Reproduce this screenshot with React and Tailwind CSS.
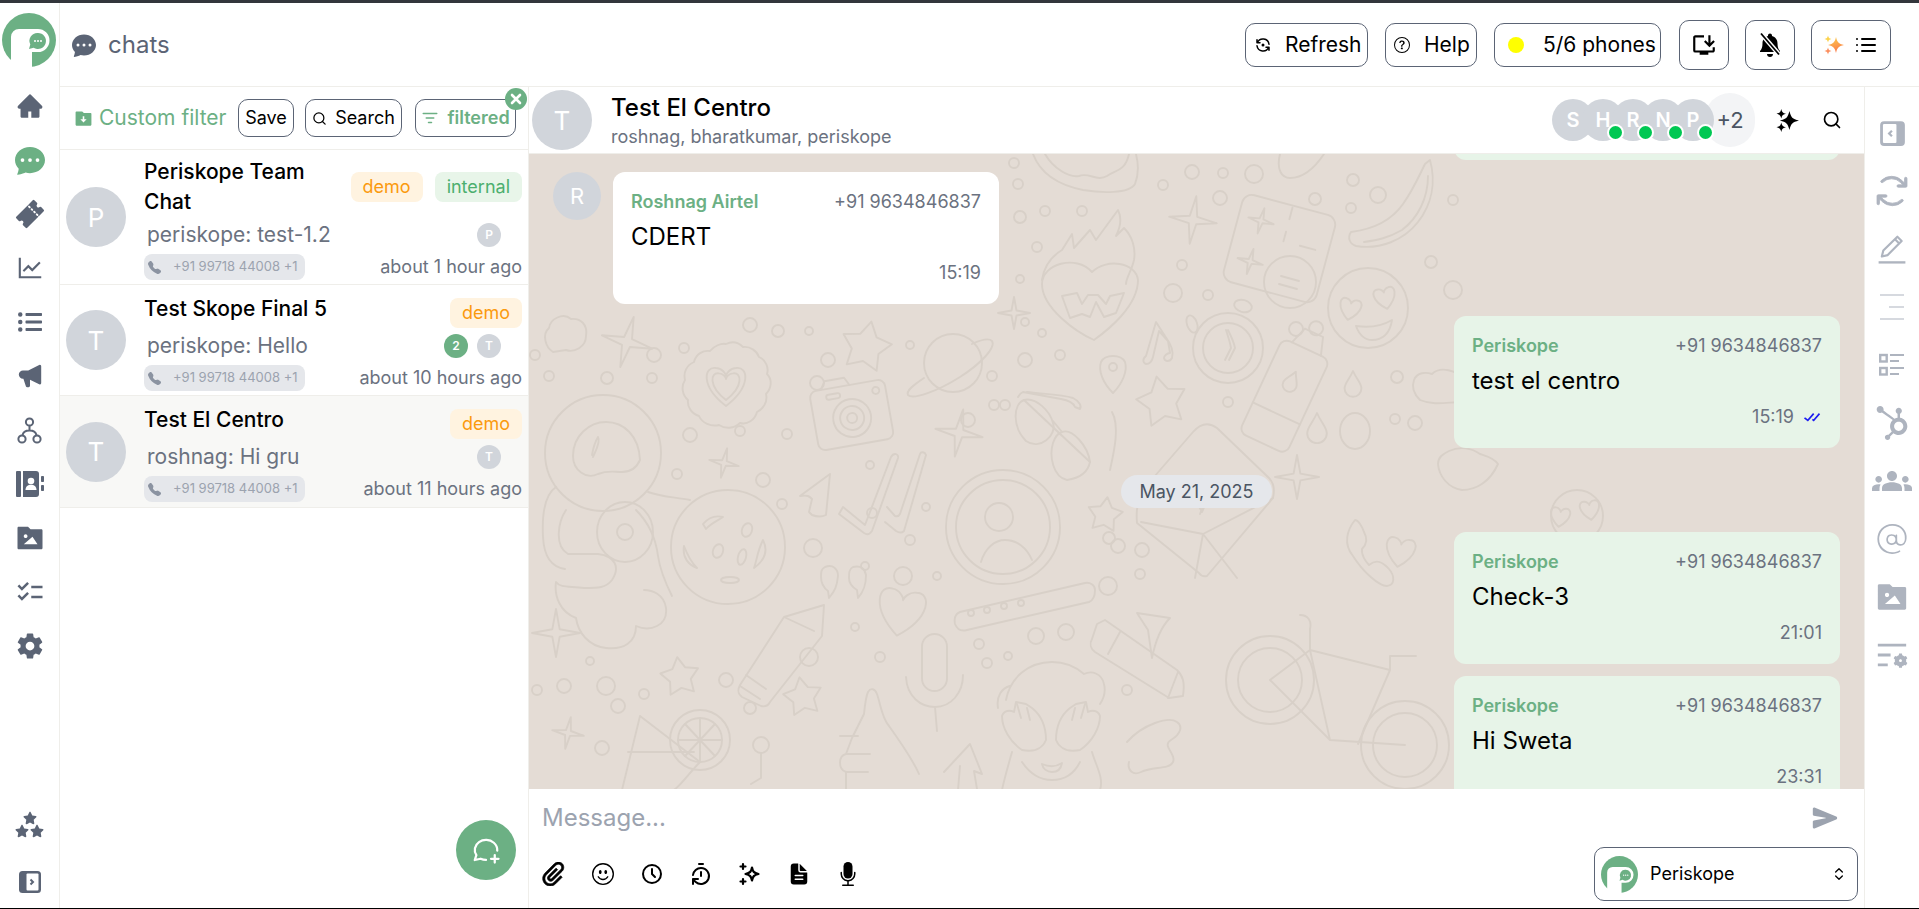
import React from 'react'
import { IoTicket, IoSettingsSharp, IoSend, IoDocumentText } from 'react-icons/io5'
import { BsChatDotsFill, BsEmojiSmile, BsQuestionCircle, BsTelephoneFill, BsFillMicFill } from 'react-icons/bs'
import { AiOutlineLineChart, AiFillHome } from 'react-icons/ai'
import { FaListUl, FaHubspot, FaStar } from 'react-icons/fa'
import { HiSpeakerphone } from 'react-icons/hi'
import { TbRefreshDot, TbMessageCirclePlus, TbClock } from 'react-icons/tb'
import { RiFolderImageFill, RiFolderDownloadFill, RiListSettingsFill } from 'react-icons/ri'
import { MdChecklist, MdOutlineInstallDesktop, MdGroups } from 'react-icons/md'
import { LuTimerReset, LuSearch, LuChevronsUpDown, LuListFilter, LuList } from 'react-icons/lu'
import { PiArrowsClockwise } from 'react-icons/pi'
import { CiAt } from 'react-icons/ci'
import { ImAttachment } from 'react-icons/im'
import { BiCheckDouble } from 'react-icons/bi'

const Logo = ({ size = 54 }) => (
  <svg width={size} height={size} viewBox="0 0 54 54">
    <circle cx="27" cy="27" r="27" fill="#6cb084" />
    <path d="M9 54V24a8 8 0 0 1 8-8h19a11 11 0 0 1 0 23h-6v15z" fill="#fff" />
    <path d="M36 20a8 8 0 1 1-4.400 14.700L27 36l1.300-4.400A8 8 0 0 1 36 20z" fill="#6cb084" />
    <circle cx="33" cy="28" r="1" fill="#fff" />
    <circle cx="36" cy="28" r="1" fill="#fff" />
    <circle cx="39" cy="28" r="1" fill="#fff" />
  </svg>
)

const SidebarIcon = ({ size = 24, flip = false, color = '#5b6475' }) => (
  <svg width={size} height={size} viewBox="0 0 24 24" className={flip ? '-scale-x-100' : ''}>
    <rect x="1" y="1" width="22" height="22" rx="3.500" fill={color} />
    <rect x="8.500" y="3.500" width="12" height="17" rx="1" fill="#fff" />
    <path d="M12.500 9.500l2.500 2.500-2.500 2.500" fill="none" stroke={color} strokeWidth="2" />
  </svg>
)

const Sparkle4 = ({ x, y, r, fill }) => (
  <path d={`M${x} ${y - r}C${x + r * 0.18} ${y - r * 0.3} ${x + r * 0.3} ${y - r * 0.18} ${x + r} ${y}C${x + r * 0.3} ${y + r * 0.18} ${x + r * 0.18} ${y + r * 0.3} ${x} ${y + r}C${x - r * 0.18} ${y + r * 0.3} ${x - r * 0.3} ${y + r * 0.18} ${x - r} ${y}C${x - r * 0.3} ${y - r * 0.18} ${x - r * 0.18} ${y - r * 0.3} ${x} ${y - r}z`} fill={fill} />
)

const GradientStars = () => (
  <svg width="20" height="22" viewBox="0 0 20 22">
    <defs>
      <linearGradient id="spark" x1="0" y1="0" x2="0.3" y2="1">
        <stop offset="0" stopColor="#fcd34d" />
        <stop offset="1" stopColor="#fb7c4b" />
      </linearGradient>
    </defs>
    <Sparkle4 x={12} y={11} r={8} fill="url(#spark)" />
    <Sparkle4 x={4} y={5} r={3.500} fill="#fcd34d" />
    <Sparkle4 x={4} y={17} r={3.500} fill="#fb8f5f" />
  </svg>
)

const BlackStars = () => (
  <svg width="23" height="23" viewBox="0 0 24 24">
    <Sparkle4 x={14} y={12} r={10} fill="#000" />
    <Sparkle4 x={5.500} y={5} r={5} fill="#000" />
    <Sparkle4 x={5.500} y={19} r={5} fill="#000" />
  </svg>
)

const OutlineStars = () => (
  <svg width="24" height="24" viewBox="0 0 24 24" fill="none" stroke="#000" strokeWidth="2.200" strokeLinejoin="round">
    <path d="M14 5.500c.8 4 1.800 5.500 6.500 6.500-4.700 1-5.700 2.500-6.500 6.500-.8-4-1.800-5.500-6.500-6.500 4.700-1 5.700-2.500 6.500-6.500z" />
    <path d="M5 2v5M2.500 4.500h5M5 17v5M2.500 19.500h5" strokeLinecap="round" />
  </svg>
)

const BellOff = () => (
  <svg width="24" height="26" viewBox="0 0 24 26">
    <path d="M12 1.500c1.100 0 2 .9 2 2v.6c3.400.9 5.500 3.800 5.500 7.400 0 4 .9 5.800 2.500 7.500v1H2v-1c1.600-1.700 2.500-3.500 2.500-7.500 0-3.600 2.100-6.500 5.500-7.400v-.6c0-1.100.9-2 2-2zM9 22h6c0 1.700-1.300 3-3 3s-3-1.300-3-3z" fill="#000" />
    <path d="M3 1.500l19 22" stroke="#fff" strokeWidth="4.500" />
    <path d="M3 1.500l18 21" stroke="#000" strokeWidth="1.800" />
  </svg>
)

const HierarchyIcon = () => (
  <svg width="25" height="27" viewBox="0 0 25 27" fill="none" stroke="currentColor" strokeWidth="2">
    <circle cx="12.500" cy="5" r="3.600" /><circle cx="5" cy="22" r="3.600" /><circle cx="20" cy="22" r="3.600" />
    <path d="M12.500 8.600v5M12.500 13.600c-4 0-6.500 1.500-7 4.800M12.500 13.600c4 0 6.500 1.500 7 4.800" />
  </svg>
)

const ContactsIcon = () => (
  <svg width="28" height="26" viewBox="0 0 28 26" fill="currentColor">
    <rect x="0" y="0" width="5" height="26" rx="1" />
    <path d="M7 0h13a3 3 0 0 1 3 3v20a3 3 0 0 1-3 3H7z" />
    <circle cx="15" cy="10" r="3.300" fill="#fff" /><path d="M9.500 19c0-3.500 2.500-5.200 5.500-5.200s5.500 1.700 5.500 5.200z" fill="#fff" />
    <rect x="25" y="5" width="3" height="6" rx=".8" /><rect x="25" y="14" width="3" height="6" rx=".8" />
  </svg>
)

const PencilIcon = () => (
  <svg width="30" height="30" viewBox="0 0 28 28" fill="none" stroke="currentColor" strokeWidth="2" strokeLinejoin="round">
    <path d="M4.500 21l1.400-5.500L19 2.500l4 4-13 13.200z" /><path d="M16.800 4.800l4 4" />
    <path d="M1.500 26.500h25" strokeWidth="2.200" />
  </svg>
)

const AlignIcon = () => (
  <svg width="26" height="26" viewBox="0 0 26 26" stroke="currentColor" strokeWidth="1.200">
    <path d="M1 1h24M10 13h15M1 25h24" />
  </svg>
)

const DetailsIcon = () => (
  <svg width="26" height="24" viewBox="0 0 26 24" fill="none" stroke="currentColor">
    <rect x="1.200" y="2" width="6.500" height="6.500" strokeWidth="2.400" /><rect x="1.200" y="15" width="6.500" height="6.500" strokeWidth="2.400" />
    <path d="M11 2h14M11 8h9M11 15h14M11 21h9" strokeWidth="2" />
  </svg>
)

const StarsCluster = () => (
  <div className="flex flex-col items-center text-[#5b6475]">
    <FaStar size={14} />
    <div className="flex gap-[1px] -mt-[1px]"><FaStar size={14} /><FaStar size={14} /></div>
  </div>
)

// wallpaper helpers, all in page pixels
const starPath = (cx, cy, r, rot = 0) => {
  let d = ''
  for (let i = 0; i < 10; i++) {
    const a = (Math.PI / 5) * i - Math.PI / 2 + (rot * Math.PI) / 180
    const rr = i % 2 ? r * 0.55 : r
    d += `${i ? 'L' : 'M'}${(cx + rr * Math.cos(a)).toFixed(1)} ${(cy + rr * Math.sin(a)).toFixed(1)}`
  }
  return d + 'z'
}
const sparklePath = (cx, cy, r, rot = 0) => {
  let d = ''
  for (let i = 0; i < 4; i++) {
    const a = (Math.PI / 2) * i - Math.PI / 2 + (rot * Math.PI) / 180
    const b = a + Math.PI / 4
    const p = [cx + r * Math.cos(a), cy + r * Math.sin(a)]
    const q = [cx + r * 0.22 * Math.cos(b), cy + r * 0.22 * Math.sin(b)]
    d += `${i ? 'L' : 'M'}${p[0].toFixed(1)} ${p[1].toFixed(1)}L${q[0].toFixed(1)} ${q[1].toFixed(1)}`
  }
  return d + 'z'
}
const heartPath = (cx, cy, s, rot = 0) => {
  const c = Math.cos((rot * Math.PI) / 180)
  const n = Math.sin((rot * Math.PI) / 180)
  const t = (x, y) => `${(cx + s * (x * c - y * n)).toFixed(1)} ${(cy + s * (x * n + y * c)).toFixed(1)}`
  return `M${t(0, 1)}C${t(-1.3, 0)} ${t(-1.1, -1)} ${t(-0.5, -0.9)}C${t(-0.2, -0.9)} ${t(0, -0.6)} ${t(0, -0.5)}C${t(0, -0.6)} ${t(0.2, -0.9)} ${t(0.5, -0.9)}C${t(1.1, -1)} ${t(1.3, 0)} ${t(0, 1)}z`
}
const dropPath = (x, y, s) => `M${x} ${y - s}C${x + s * 0.3} ${y - s * 0.3} ${x + s * 0.7} ${y} ${x + s * 0.7} ${y + s * 0.45}A${s * 0.7} ${s * 0.7} 0 0 1 ${x - s * 0.7} ${y + s * 0.45}C${x - s * 0.7} ${y} ${x - s * 0.3} ${y - s * 0.3} ${x} ${y - s}z`

const dots = [
  [535,355,5],[549,376,5],[607,378,6],[652,378,5],[654,355,7],[684,348,5],[690,435,7],[677,474,5],[787,434,5],[763,480,7],[740,431,5],[817,383,7],[828,360,7],[778,331,6],[750,325,7],[809,331,4],[910,345,4],[1025,322,4],[1042,333,4],[1025,360,7],[1060,355,5],[1005,405,5],[994,405,5],[968,420,7],[992,376,5],[782,504,5],[870,465,4],[872,513,5],[813,548,9],[926,507,4],[910,540,5],[865,566,4],[903,576,9],[937,576,4],[1118,546,7],[1142,550,7],[1140,574,5],[1109,538,6],[1108,586,9],[590,661,4],[564,686,7],[606,686,9],[644,694,5],[618,706,7],[726,680,7],[750,708,6],[809,657,9],[880,657,5],[855,627,4],[979,644,5],[1036,636,8],[1066,632,8],[987,663,5],[1008,656,4],[1127,690,5],[602,748,7],[537,690,5],
  [1014,163,5],[1018,184,5],[1020,217,6],[1045,211,5],[1082,211,5],[1037,247,5],[1163,185,5],[1192,172,7],[1223,173,5],[1254,174,9],[1220,198,7],[1315,199,6],[1353,180,6],[1378,195,8],[1351,208,5],[1182,265,5],[1173,293,9],[1208,295,5],[1020,279,4],[1296,329,7],[1431,262,6],[1453,290,9],[1397,377,6],[1395,419,5],[1415,423,7],[1228,402,5],[1453,200,5]
]

const Doodles = () => (
  <svg className="absolute inset-0 w-full h-full" aria-hidden="true">
    <g transform="translate(-529 -154)" fill="none" stroke="#d8d0c8" strokeWidth="1.900" strokeLinecap="round" strokeLinejoin="round">
      {dots.map((d, i) => <circle key={i} cx={d[0]} cy={d[1]} r={d[2]} />)}
      {[[627,342,26,15],[959,433,24,10],[556,633,24,0],[724,463,15,12],[568,733,16,10],[1193,220,24,8],[1014,313,16,0],[1297,477,22,0]].map((s, i) => <path key={i} d={sparklePath(s[0], s[1], s[2], s[3])} />)}
      {[[866,347,26,12],[1105,515,18,8],[680,677,20,-8],[803,697,20,-10],[1162,402,26,-12]].map((s, i) => <path key={i} d={starPath(s[0], s[1], s[2], s[3])} />)}
      {/* cloud */}
      <path d="M553 352c-8-5-11-18-4-24 1-9 14-16 22-9 10-1 17 6 15 17 0 11-12 17-20 14z" />
      {/* cookie with heart */}
      <path d="M726 344c8-4 14 0 17 3 7-1 14 4 16 10 7 3 10 11 8 17 6 6 4 15-1 20 2 8-3 15-9 18-2 8-10 13-17 11-6 6-15 6-21 2-8 2-17-2-20-9-7-2-12-9-11-16-6-5-7-14-3-20-2-8 2-15 9-18 2-8 9-12 16-11 4-5 11-8 16-7z" />
      <path d={heartPath(726, 386, 20)} /><path d={heartPath(726, 386, 14)} />
      {/* planet */}
      <circle cx="953" cy="363" r="29" />
      <path d="M924 378c-12 8-18 13-16 17 5 5 30-4 52-18s36-30 32-36c-3-3-9-2-20 3" />
      {/* camera */}
      <g transform="rotate(-10 852 417)">
        <rect x="814" y="385" width="76" height="60" rx="7" />
        <path d="M826 385l5-8h20l4 8" />
        <circle cx="852" cy="418" r="19" /><circle cx="852" cy="418" r="12" /><circle cx="852" cy="418" r="5" />
        <circle cx="880" cy="395" r="3.500" /><rect x="830" y="391" width="14" height="5" rx="2.500" />
      </g>
      {/* glasses */}
      <path d="M1027 392c14 2 34 2 46 6 6 3 9 8 7 11l-5-2c-2-5-8-7-14-8l-38-7c-4 2-4 4-5 5" />
      <path d="M1024 400c-11 4-12 27 2 41 14 10 31-6 27-18-3-12-17-26-29-23zM1062 432l-9-11M1062 432c10-4 26 14 28 30-2 10-10 16-23 18-14-3-18-24-14-37 2-6 5-10 9-11z" />
      <path d="M1024 400l66 62M1112 412c8 14 2 40-2 58" />
      {/* map pin */}
      <path d="M1113 393c-10-10-15-22-12-31 4-8 20-8 24 0 3 9-3 22-12 31z" /><circle cx="1113" cy="367" r="4" />
      {/* astronaut */}
      <circle cx="603" cy="453" r="58" />
      <path d="M573 456c0-20 16-34 33-34 18 0 33 14 34 38-4 9-10 12-18 12-8 0-14-2-24 2-12 6-25-4-25-18z" />
      <path d="M592 455c1-6 3-13 6-18M598 437c3 5-3 15-5 20" />
      <path d="M556 487c-12 8-14 30-13 50 1 20 8 30 22 32M566 510c-8 12-12 36 2 44h30c18 2 22 14 14 26-6 8-14 8-28 8-14-2-24 0-28-6-2 14 4 30 20 36 2 14 12 28 30 30 18 2 30-6 30-22 14 6 32 0 30-18-2-14-14-18-22-18" />
      <path d="M636 510c14 14 20 30 22 46 2 14 8 28 14 40" />
      <ellipse cx="625" cy="532" rx="28" ry="30" /><circle cx="625" cy="532" r="8" />
      <path d="M648 492c14 5 26 5 42 8" />
      {/* moon */}
      <circle cx="728" cy="547" r="57" />
      <ellipse cx="747" cy="530" rx="5" ry="7" transform="rotate(20 747 530)" /><ellipse cx="718" cy="551" rx="5" ry="7" transform="rotate(20 718 551)" /><ellipse cx="742" cy="557" rx="4" ry="8" transform="rotate(15 742 557)" /><ellipse cx="730" cy="580" rx="9" ry="3" /><path d="M703 524c6-7 12-9 20-7-6 4-13 7-17 12z" /><path d="M684 546c3 8 6 15 13 22-8-3-15-10-13-22zM763 540c5 10 2 20-9 28 3-8 3-16 9-28z" />
      {/* plane */}
      <path d="M830 474l-30 22c8-1 9 0 12 3l-3 13 3 3c5 2 10 2 14 0z" />
      {/* double tick */}
      <path d="M843 507l22 18 26-68c3-5 8-3 7 1l-26 73c-2 3-5 4-8 2l-25-19zM887 507l8 9c3 1 4 0 5-2l20-60c1-3 5-2 6 1l-22 76c-2 2-5 2-8 0l-11-9" />
      {/* person */}
      <circle cx="1003" cy="527" r="57" /><circle cx="1003" cy="527" r="47" /><circle cx="999" cy="517" r="14" /><path d="M981 562c4-14 14-22 24-22 12 0 22 8 27 20" />
      {/* quote */}
      <path d="M825 567c8-3 13 2 13 9-1 10-3 15-9 22l-1-7c-4-3-7-8-7-14 0-5 0-8 4-10zM853 567c8-2 12 2 13 8 0 10-2 16-8 23l-1-8c-5-3-8-7-8-12 0-5 0-9 4-11z" />
      {/* heart */}
      <path d={heartPath(901, 612, 24, 10)} />
      {/* pencil */}
      <path d="M824 605l-40 12-44 68c-3 6-2 9 2 12l19 9c4 1 7 0 9-4l52-66zM784 617l30 14M746 675l20 14M740 686l20 13" />
      {/* watch band */}
      <path d="M960 612c-5 2-6 7-5 12 2 5 5 8 12 6l122-28c5-2 6-8 6-12 0-5-5-8-10-7z" />
      <circle cx="971" cy="613" r="3" /><circle cx="987" cy="610" r="3" /><circle cx="1004" cy="606" r="3" /><circle cx="1021" cy="603" r="3" />
      {/* mic */}
      <rect x="922" y="634" width="25" height="57" rx="12.500" /><path d="M906 677c1 20 15 30 29 30 16 0 28-14 28-32M935 707l2 24" />
      {/* girl covering her eyes */}
      <path d="M1006 700c4-22 22-38 46-38 14 0 24 5 32 12 8-4 18 0 20 10 2 8 0 14-4 20M1010 686c-8 2-14 10-12 22" />
      <path d="M1002 716c2-6 8-6 12-4l2-10 10 2 6 4c10 8 14 20 14 32-4 10-14 12-24 10-12-8-20-22-20-34zM1100 716c-2-6-8-6-12-4l-2-10-10 2-6 4c-10 8-14 20-14 32 4 10 14 12 24 10 12-8 20-22 20-34z" />
      <path d="M1017 704l4 14M1027 708l3 12M1085 704l-4 14M1075 708l-3 12" />
      <path d="M1042 764c7 3 14 3 20-1-1 6-5 9-10 9s-9-3-10-8zM1012 752c-4 14-8 28-10 38M1092 752c4 14 12 26 8 38M1022 762c8 12 18 18 30 18 12 0 22-6 28-18" />
      {/* thumb */}
      <path d="M846 790v-18c-8-3-8-16 0-18l6-16 12-24c1-10 2-18 4-22 3-5 7-3 9 2 4 12 5 24 12 32 10 14 24 34 30 48M840 736h18M846 754h24M846 772h22" />
      {/* cocktail */}
      <path d="M640 716l-18 74M640 716l60 46c-10 10-18 22-26 28M628 752h66" /><circle cx="700" cy="740" r="30" /><circle cx="700" cy="740" r="22" /><path d="M700 718v44M678 740h44M685 724l30 32M685 756l30-32" />
      <circle cx="761" cy="745" r="8" /><path d="M761 753v25l-10 6" />
      {/* arrow */}
      <path d="M944 772l26-28 12 30-8-3 3 18M960 766l-2 24" />
      {/* donut top */}
      <path d="M1033 154c6 16 20 30 50 36 18 3 46 4 52-6 4-10 3-22 1-30" />
      <path d="M1045 154c8 14 24 24 34 22 10-4 18 6 28 0 8-6 18-4 22-22" />
      {/* heart on fire */}
      <path d="M1042 280c2-14 10-24 20-30l10-16 2 14 16-18 6 10 22-30c4 8 2 18-2 26l8-8c8 8 12 20 10 32-2 10-8 18-8 24" />
      <path d="M1042 284c0-20 34-30 50-12 14-14 44-10 46 8 0 26-30 50-44 60-18-8-52-32-52-56z" />
      <path d="M1062 296l8 22 12-4 8 3 6-15 8 15 12-4 8-20-14 3-4 8-8-9h-10l-6 9-5-11z" />
      {/* music note */}
      <path d="M1146 356c-4 3-3 7 0 8 4 0 6-3 7-7l6-26 9 10 2 12c-3 0-6 3-6 5 1 4 6 4 8 0 2-6-1-14-7-22l-9-14z" />
      {/* card */}
      <g transform="rotate(15 1277 250)">
        <rect x="1231" y="203" width="96" height="90" rx="10" />
        <path d="M1281 205v12M1281 230v10M1298 240h16" />
        <path d={sparklePath(1254, 226, 13, 0)} /><path d={sparklePath(1254, 268, 13, 0)} />
      </g>
      <circle cx="1290" cy="282" r="26" /><path d="M1281 276l18 5M1279 284l18 5" />
      {/* banana */}
      <path d="M1430 160c6 22 2 44-12 62-14 18-38 28-62 24-6-2-9-8-5-14 16-2 38-8 52-28 10-14 16-28 22-40l5-4zM1428 176c0 22-10 42-26 54-14 8-24 10-38 12" />
      <path d="M1280 154c-4 16 2 24 10 24 14 0 26-12 34-24" />
      {/* love face */}
      <circle cx="1368" cy="308" r="40" />
      <path d={heartPath(1350, 309, 11, 12)} /><path d={heartPath(1385, 298, 11, -12)} /><path d="M1356 326c14 2 26 0 36-6-2 14-10 20-20 20-8 0-13-6-16-14z" />
      {/* clock */}
      <circle cx="1228" cy="348" r="35" /><circle cx="1228" cy="348" r="25" /><ellipse cx="1243" cy="306" rx="9" ry="6" transform="rotate(15 1243 306)" /><ellipse cx="1192" cy="324" rx="5" ry="9" transform="rotate(-20 1192 324)" />
      <path d="M1226 330c2 6 4 12 5 18l-6 12M1228 330c3 6 6 12 7 18l-6 12" />
      {/* bottle */}
      <g transform="rotate(25 1287 393)">
        <rect x="1260" y="345" width="52" height="104" rx="8" /><path d="M1270 345l6-18h20l6 18M1260 416h52" /><circle cx="1286" cy="322" r="7" /><path d={dropPath(1286, 380, 10)} />
      </g>
      <path d={dropPath(1353, 383, 12)} /><path d={dropPath(1317, 427, 14)} />
      <ellipse cx="1355" cy="431" rx="15" ry="18" />
      <path d="M1420 400c-6-6-9-12-6-20 3-8 12-8 18-6 8-8 26-4 30 6v22c-14 0-28 4-42-2z" />
      {/* envelope */}
      <path d="M1141 492l52-60c8-9 16-10 24-4l52 50c5 5 6 11 4 20l-66 78c-4 1-6 0-8-3l-62-50c-1-10 0-20 4-31z" />
      <path d="M1141 522l62 12 34 44M1195 578l8-44 70-36M1190 490l12 22 14-32M1213 480l-13 34" />
      {/* right side */}
      <path d={heartPath(1400, 552, 15, 10)} />
      <circle cx="1577" cy="516" r="26" /><path d={heartPath(1560, 517, 10, 8)} /><path d={heartPath(1590, 510, 10, -8)} />
      <path d="M1355 520c-8 10-12 24-2 36 10 16 26 30 34 30 8-1 8-10 2-17-7-8-13-10-20-4-3-3-8-10-7-16 4-4 6-10 2-17-2-6-6-12-9-12z" />
      <path d="M1449 451c-6 3-11 6-11 13 1 12 10 24 24 26 14 0 28-8 36-26-4-6-12-8-18-10-8-6-20-8-31-3z" />
      <path d="M1137 613l33 5c-8 8-14 20-18 40l-4-28z" />
      {/* bike */}
      <circle cx="1270" cy="680" r="44" /><circle cx="1270" cy="680" r="32" /><circle cx="1405" cy="745" r="44" /><circle cx="1405" cy="745" r="32" />
      <path d="M1270 680l60 60 75 5M1330 740l-20-90 80 20-32 74M1310 650l-40 30M1300 615c8 0 12 6 10 14l0 21M1390 670l0-14 26 0" />
      {/* pencil 2 */}
      <path d="M1105 620l72 50c6 6 8 12 6 26l-14 2-74-46c-4-3-6-8-3-13l5-15zM1120 632l-12 22M1178 672l-10 26" />
      <path d="M1127 742c16-18 42-26 50-20 6 4 4 12-6 18-10 6 6 14 2 22-4 8-20 4-32 10-8 4-14-2-12-10" />
    </g>
  </svg>
)

const navItems = [
  { icon: <AiFillHome size={28} />, key: 'home' },
  { icon: <BsChatDotsFill size={30} className="text-[#6cb084]" />, key: 'chats' },
  { icon: <IoTicket size={30} />, key: 'tickets' },
  { icon: <AiOutlineLineChart size={30} />, key: 'stats' },
  { icon: <FaListUl size={24} />, key: 'lists' },
  { icon: <HiSpeakerphone size={28} />, key: 'broadcast' },
  { icon: <HierarchyIcon />, key: 'rules' },
  { icon: <ContactsIcon />, key: 'contacts' },
  { icon: <RiFolderImageFill size={30} />, key: 'media' },
  { icon: <MdChecklist size={30} />, key: 'tasks' },
  { icon: <IoSettingsSharp size={28} />, key: 'settings' },
]

const rightItems = [
  <SidebarIcon key="a" size={27} flip color="#aeb4bf" />,
  <PiArrowsClockwise key="b" size={40} stroke="currentColor" strokeWidth={5} />,
  <PencilIcon key="c" />,
  <AlignIcon key="d" />,
  <DetailsIcon key="e" />,
  <FaHubspot key="f" size={34} />,
  <MdGroups key="g" size={40} />,
  <CiAt key="h" size={36} />,
  <RiFolderImageFill key="i" size={34} />,
  <RiListSettingsFill key="j" size={34} />,
]

const Tag = ({ label, kind }) => (
  <span className={`h-[30px] px-3 rounded-lg flex items-center text-lg shrink-0 ${kind === 'demo' ? 'bg-[#fff3e0] text-[#fb9a0e]' : 'bg-[#e8f5e9] text-[#4caf6e]'}`}>{label}</span>
)

const ChatRow = ({ initial, title, preview, tags, unread, time, active, first, height }) => (
  <div className={`flex border-b border-[#efeeea] ${height} ${active ? 'bg-[#f8f8f6]' : ''}`}>
    <div className="w-[60px] h-[60px] ml-[6px] self-center rounded-full bg-[#d1d5db] text-white text-[26px] flex items-center justify-center shrink-0">{initial}</div>
    <div className={`ml-[18px] flex-1 min-w-0 pr-[6px] ${first ? 'pt-[7px]' : 'pt-[13px]'}`}>
      <div className={`flex justify-between ${first ? 'items-center' : 'h-[30px]'}`}>
        <div className={`text-[21px] font-medium text-black leading-[30px] ${first ? 'w-[190px]' : '-mt-[4px]'}`}>{title}</div>
        <div className="flex gap-3">{tags.map((t) => <Tag key={t} label={t} kind={t} />)}</div>
      </div>
      <div className="flex items-center justify-between h-[30px] mt-[3px] pl-[3px]">
        <span className="text-[21px] text-[#6b7280]">{preview}</span>
        <div className="flex items-center gap-[9px] mr-[21px]">
          {unread && <span className="w-6 h-6 rounded-full bg-[#6cb084] text-white text-xs font-semibold flex items-center justify-center">{unread}</span>}
          <span className="w-6 h-6 rounded-full bg-[#d1d5db] text-white text-xs font-semibold flex items-center justify-center">{initial}</span>
        </div>
      </div>
      <div className="flex items-center justify-between mt-[3px]">
        <div className="h-[26px] w-[161px] rounded-lg bg-[#e5e7eb] text-[#9ca3af] flex items-center pl-1 text-[13px] whitespace-nowrap">
          <BsTelephoneFill size={13} className="text-[#8b93a1] shrink-0" />
          <span className="ml-[12px]">+91 99718 44008 +1</span>
        </div>
        <span className="text-lg text-[#6b7280]">{time}</span>
      </div>
    </div>
  </div>
)

const Bubble = ({ name, mine, text, time, read }) => (
  <div className={`w-[386px] h-[132px] shrink-0 rounded-xl px-[18px] pt-[18px] ${mine ? 'bg-[#e7f4e8] self-end mr-[24px]' : 'bg-white'}`}>
    <div className="flex justify-between items-center h-6">
      <span className="text-lg font-semibold text-[#6cb084]">{name}</span>
      <span className="text-lg text-[#6b7280]">+91 9634846837</span>
    </div>
    <div className="text-2xl text-black mt-2 leading-[30px]">{text}</div>
    <div className="flex justify-end items-center gap-2 mt-[9px] text-lg text-[#6b7280] leading-6 h-6">
      <span>{time}</span>
      {read && <BiCheckDouble size={20} className="text-[#1d1df0]" />}
    </div>
  </div>
)

const App = () => {
  return (
    <div className="h-screen w-full flex flex-col overflow-hidden bg-white [font-family:Inter,sans-serif]">
      <div className="h-[3px] bg-[#33363c] shrink-0" />
      <div className="flex-1 flex min-h-0">
        {/* left rail */}
        <aside className="w-[60px] shrink-0 border-r border-[#efeeea] flex flex-col items-center text-[#5b6475] pt-[10px] pb-[6px]">
          <div className="-ml-[1px]"><Logo /></div>
          <div className="mt-[12px] flex flex-col items-center">
            {navItems.map((n) => <div key={n.key} className="h-[54px] flex items-center justify-center">{n.icon}</div>)}
          </div>
          <div className="mt-auto flex flex-col items-center gap-[18px]">
            <div className="h-10 flex items-center"><StarsCluster /></div>
            <div className="h-10 flex items-center"><SidebarIcon /></div>
          </div>
        </aside>

        <div className="flex-1 min-w-0 flex flex-col">
          {/* top header */}
          <header className="h-[84px] shrink-0 border-b border-[#efeeea] flex items-center pl-3 pr-[28px]">
            <BsChatDotsFill size={24} className="text-[#5b6475]" />
            <span className="ml-3 text-2xl text-[#5b6475]">chats</span>
            <div className="ml-auto flex items-center">
              <button className="h-11 w-[123px] rounded-[10px] border border-[#5b6475] flex items-center pl-2 gap-[13px] text-[21px] text-black whitespace-nowrap"><TbRefreshDot size={18} className="shrink-0" />Refresh</button>
              <button className="ml-[17px] h-11 w-[92px] rounded-[10px] border border-[#5b6475] flex items-center pl-2 gap-[14px] text-[21px] text-black whitespace-nowrap"><BsQuestionCircle size={16} className="shrink-0" />Help</button>
              <button className="ml-[17px] h-[44px] w-[167px] rounded-[10px] border border-[#5b6475] flex items-center pl-[13px] gap-[19px] text-[21px] text-black whitespace-nowrap"><span className="w-4 h-4 rounded-full bg-[#ffff00] shrink-0" />5/6 phones</button>
              <button className="ml-[18px] h-[50px] w-[50px] rounded-[10px] border border-[#5b6475] flex items-center justify-center text-black"><MdOutlineInstallDesktop size={26} /></button>
              <button className="ml-4 h-[50px] w-[50px] rounded-[10px] border border-[#5b6475] flex items-center justify-center text-black"><BellOff /></button>
              <button className="ml-4 h-[50px] w-[80px] rounded-[10px] border border-[#5b6475] flex items-center justify-center gap-[10px] text-black"><GradientStars /><LuList size={24} /></button>
            </div>
          </header>

          <div className="flex-1 flex min-h-0">
            {/* chat list */}
            <section className="w-[469px] shrink-0 border-r border-[#efeeea] flex flex-col relative">
              <div className="h-[63px] shrink-0 border-b border-[#efeeea] flex items-center pl-[14px]">
                <RiFolderDownloadFill size={19} className="text-[#6cb084]" />
                <span className="ml-[6px] w-[128px] whitespace-nowrap text-[21px] text-[#6cb084]">Custom filter</span>
                <button className="ml-[11px] h-[38px] w-14 rounded-[10px] border border-[#5b6475] text-lg text-black">Save</button>
                <button className="ml-[11px] h-[38px] w-[97px] rounded-[10px] border border-[#5b6475] text-lg text-black flex items-center justify-center gap-2"><LuSearch size={15} />Search</button>
                <div className="relative ml-[13px]">
                  <button className="h-[38px] w-[101px] rounded-[10px] border border-[#5b6475] text-lg font-semibold text-[#6cb084] flex items-center justify-center gap-2"><LuListFilter size={18} className="shrink-0" />filtered</button>
                  <span className="absolute -top-[11px] -right-[11px] w-[22px] h-[22px] rounded-full bg-[#6cb084] text-white flex items-center justify-center">
                    <svg width="12" height="12" viewBox="0 0 12 12" stroke="#fff" strokeWidth="2.600" strokeLinecap="round"><path d="M2 2l8 8M10 2l-8 8" /></svg>
                  </span>
                </div>
              </div>
              <ChatRow first height="h-[135px]" initial="P" title="Periskope Team Chat" preview="periskope: test-1.2" tags={['demo', 'internal']} time="about 1 hour ago" />
              <ChatRow height="h-[111px]" initial="T" title="Test Skope Final 5" preview="periskope: Hello" tags={['demo']} unread="2" time="about 10 hours ago" />
              <ChatRow active height="h-[112px]" initial="T" title="Test El Centro" preview="roshnag: Hi gru" tags={['demo']} time="about 11 hours ago" />
              <button className="absolute right-[12px] bottom-[28px] w-[60px] h-[60px] rounded-full bg-[#6cb084] text-white flex items-center justify-center"><TbMessageCirclePlus size={30} strokeWidth={1.8} /></button>
            </section>

            {/* chat */}
            <main className="flex-1 min-w-0 flex flex-col">
              <div className="h-[67px] shrink-0 flex items-center pl-[3px] pr-[22px] border-b border-[#efeeea]">
                <div className="w-[60px] h-[60px] rounded-full bg-[#d1d5db] text-white text-[26px] flex items-center justify-center">T</div>
                <div className="ml-[19px]">
                  <div className="text-[24px] font-medium text-black leading-8">Test El Centro</div>
                  <div className="text-lg text-[#6b7280] leading-6 mt-[1px]">roshnag, bharatkumar, periskope</div>
                </div>
                <div className="ml-auto flex items-center">
                  {['S', 'H', 'R', 'N', 'P'].map((c, i) => (
                    <div key={c} className={`relative w-[42px] h-[42px] rounded-full bg-[#d1d5db] text-white text-[20px] font-semibold flex items-center justify-center ${i ? '-ml-[12px]' : ''}`}>
                      {c}
                      {i > 0 && <span className="absolute z-10 right-0 bottom-0 w-[17px] h-[17px] rounded-full bg-[#00c853] border-2 border-white" />}
                    </div>
                  ))}
                  <div className="-ml-[9px] w-[50px] h-[54px] rounded-full bg-[#f3f4f6] text-[#4b5563] text-[22px] flex items-center justify-center">+2</div>
                  <div className="ml-[21px]"><BlackStars /></div>
                  <LuSearch size={20} className="ml-[23px] text-black" />
                </div>
              </div>

              <div className="relative flex-1 min-h-0 bg-[#e4dcd5] overflow-hidden">
                <Doodles />
                <div className="relative flex flex-col gap-3 -mt-[126px]">
                  <Bubble mine name="Periskope" text="" time="" />
                  <div className="flex items-start gap-3 pl-6">
                    <div className="w-12 h-12 rounded-full bg-[#d1d5db] text-white text-[22px] flex items-center justify-center">R</div>
                    <Bubble name="Roshnag Airtel" text="CDERT" time="15:19" />
                  </div>
                  <Bubble mine name="Periskope" text="test el centro" time="15:19" read />
                  <div className="self-center h-[33px] px-[18px] rounded-full bg-[#e5e7eb] text-[#4b5563] text-lg flex items-center mt-[15px] mb-3">May 21, 2025</div>
                  <Bubble mine name="Periskope" text="Check-3" time="21:01" />
                  <Bubble mine name="Periskope" text="Hi Sweta" time="23:31" />
                </div>
              </div>

              {/* composer */}
              <div className="h-[119px] shrink-0 flex flex-col pl-[13px] pr-[6px]">
                <div className="h-[58px] flex items-center justify-between pr-[20px]">
                  <span className="text-2xl text-[#9ca3af]">Message...</span>
                  <IoSend size={26} className="text-[#9ca3af]" />
                </div>
                <div className="flex items-center justify-between">
                  <div className="flex items-center gap-[25px] text-black">
                    <ImAttachment size={24} stroke="currentColor" strokeWidth={0.5} />
                    <BsEmojiSmile size={22} className="mx-[1px]" />
                    <TbClock size={24} strokeWidth={2} />
                    <LuTimerReset size={24} />
                    <OutlineStars />
                    <IoDocumentText size={24} />
                    <BsFillMicFill size={24} />
                  </div>
                  <div className="h-[54px] w-[264px] rounded-[10px] border border-[#5b6475] flex items-center pl-[6px] pr-[10px]">
                    <Logo size={37} />
                    <span className="ml-[12px] text-lg text-black">Periskope</span>
                    <LuChevronsUpDown size={16} className="ml-auto text-black" />
                  </div>
                </div>
              </div>
            </main>

            {/* right rail */}
            <aside className="w-[55px] shrink-0 border-l border-[#efeeea] flex flex-col items-center text-[#aeb4bf] pt-[17px]">
              {rightItems.map((n, i) => <div key={i} className="h-[58px] flex items-center justify-center">{n}</div>)}
            </aside>
          </div>
        </div>
      </div>
      <div className="h-px bg-black shrink-0" />
    </div>
  )
}

export default App
